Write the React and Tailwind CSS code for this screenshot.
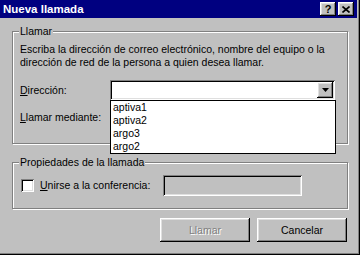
import React from 'react'

// Win95 bevels
const raised = 'shadow-[inset_-1px_-1px_0_#000,inset_1px_1px_0_#fff,inset_-2px_-2px_0_#808080,inset_2px_2px_0_#dfdfdf]'
const sunken = 'shadow-[inset_1px_1px_0_#808080,inset_-1px_-1px_0_#fff,inset_2px_2px_0_#000,inset_-2px_-2px_0_#dfdfdf]'
const etched = 'border border-[#808080] shadow-[inset_1px_1px_0_#fff,1px_1px_0_#fff]'

const TitleButton = ({ children }) => (
  <div className={`w-[16px] h-[14px] bg-[#c0c0c0] flex items-center justify-center ${raised}`}>
    {children}
  </div>
)

const ComboBox = ({ open, items = [] }) => (
  <div className={`relative flex-1 h-[20px] bg-white p-[2px] flex justify-end ${sunken}`}>
    <div className={`w-[16px] h-[16px] bg-[#c0c0c0] flex items-center justify-center ${raised}`}>
      <svg width="7" height="4" viewBox="0 0 7 4">
        <path d="M0 0h7L3.5 4z" fill="#000" />
      </svg>
    </div>
    {open && (
      <div className="absolute left-0 top-full w-[226px] h-[54px] bg-white border border-black z-10">
        {items.map((item) => (
          <div key={item} className="h-[13px] leading-[13px] pl-[2px]">{item}</div>
        ))}
      </div>
    )}
  </div>
)

export default function App() {
  return (
    <div className="w-[360px] h-[255px] overflow-hidden bg-[#c0c0c0] text-black text-[10.5px] leading-[13px] font-['Liberation_Sans',Arial,sans-serif] flex flex-col pr-[3px] shadow-[inset_-1px_-1px_0_#000,inset_-2px_-2px_0_#808080]">
      {/* title bar */}
      <div className="h-[18px] shrink-0 bg-[#000080] flex items-center pl-[3px] pr-[3px]">
        <span className="flex-1 text-white font-bold text-[11.5px]">Nueva llamada</span>
        <div className="flex gap-[2px]">
          <TitleButton>
            <span className="font-bold text-[11px] leading-none">?</span>
          </TitleButton>
          <TitleButton>
            <svg width="8" height="7" viewBox="0 0 8 7">
              <path d="M0.5 0.5l7 6M7.5 0.5l-7 6" stroke="#000" strokeWidth="1.6" />
            </svg>
          </TitleButton>
        </div>
      </div>

      <div className="flex-1 flex flex-col pl-[12px] pr-[9px]">
        <fieldset className={`mt-[7px] pl-[7px] pr-[12px] pt-[5px] pb-[16px] ${etched}`}>
          <legend className="-ml-[1px] px-[1px] bg-[#c0c0c0]">Llamar</legend>
          <p>
            Escriba la dirección de correo electrónico, nombre del equipo o la dirección de red de la persona a quien desea llamar.
          </p>
          <div className="mt-[11px] flex items-center">
            <span className="w-[90px]"><u className="underline-offset-1">D</u>irección:</span>
            <ComboBox open items={['aptiva1', 'aptiva2', 'argo3', 'argo2']} />
          </div>
          <div className="mt-[7px] flex items-center">
            <span className="w-[90px]"><u className="underline-offset-1">L</u>lamar mediante:</span>
            <ComboBox />
          </div>
        </fieldset>

        <fieldset className={`mt-[12px] pl-[7px] pr-[12px] pt-[6px] pb-[12px] ${etched}`}>
          <legend className="-ml-[1px] px-[1px] bg-[#c0c0c0]">Propiedades de la llamada</legend>
          <div className="flex items-center h-[21px]">
            <div className={`ml-[1px] w-[13px] h-[13px] bg-white ${sunken}`} />
            <span className="ml-[6px] w-[123px]"><u className="underline-offset-1">U</u>nirse a la conferencia:</span>
            <div className={`w-[139px] h-[21px] bg-[#c0c0c0] ${sunken}`} />
          </div>
        </fieldset>

        <div className="mt-[9px] flex justify-end gap-[7px] pr-[1px]">
          <button className={`w-[90px] h-[24px] bg-[#c0c0c0] text-[#808080] [text-shadow:1px_1px_0_#fff] ${raised}`}>
            Llamar
          </button>
          <button className={`w-[90px] h-[24px] bg-[#c0c0c0] ${raised}`}>
            Cancelar
          </button>
        </div>
      </div>
    </div>
  )
}
